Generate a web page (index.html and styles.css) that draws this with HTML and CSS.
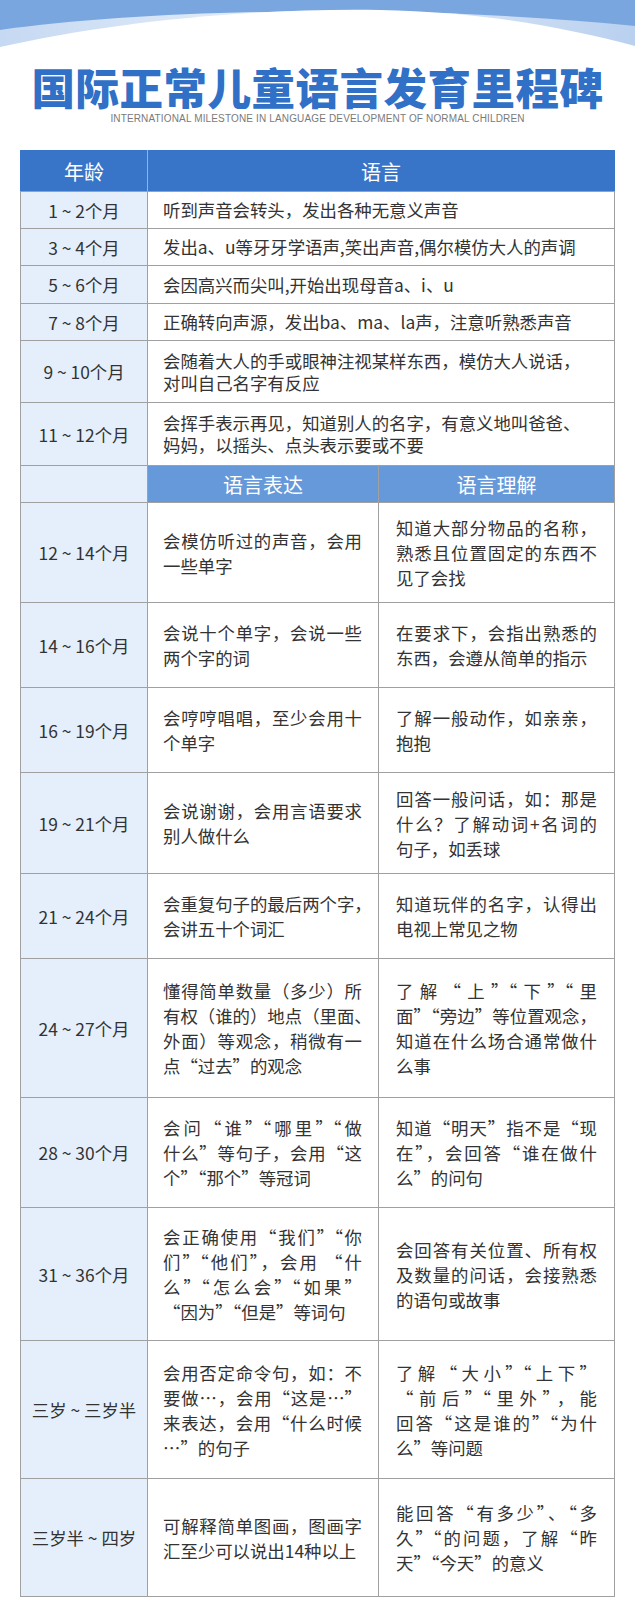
FILE: index.html
```html
<!DOCTYPE html>
<html lang="zh-CN">
<head>
<meta charset="utf-8">
<title>国际正常儿童语言发育里程碑</title>
<link rel="stylesheet" href="styles.css">
</head>
<body>
<div class="deco">
  <svg viewBox="0 0 635 60" width="635" height="60" preserveAspectRatio="none">
    <defs>
      <linearGradient id="band" x1="0" y1="0" x2="1" y2="0">
        <stop offset="0" stop-color="#c6d9f2"/>
        <stop offset="0.5" stop-color="#e9f1fb"/>
        <stop offset="1" stop-color="#b9d0ef"/>
      </linearGradient>
    </defs>
    <rect x="0" y="0" width="635" height="60" fill="#7aa6e0"/>
    <path d="M0,60 L0,30 C160,8 420,4 635,26 L635,60 Z" fill="url(#band)"/>
    <path d="M0,60 L0,47 C110,22 250,8 380,10 C480,12 560,26 635,46 L635,60 Z" fill="#ffffff"/>
  </svg>
</div>
<header class="head">
  <h1 class="title">国际正常儿童语言发育里程碑</h1>
  <p class="subtitle">INTERNATIONAL MILESTONE IN LANGUAGE DEVELOPMENT OF NORMAL CHILDREN</p>
</header>
<table class="chart">
  <colgroup>
    <col class="c-age">
    <col class="c-mid">
    <col class="c-right">
  </colgroup>
  <tr class="hd">
    <th class="th-age">年龄</th>
    <th colspan="2">语言</th>
  </tr>
  <tr class="h37"><td class="age">1 ~ 2个月</td><td class="txt" colspan="2">听到声音会转头，发出各种无意义声音</td></tr>
  <tr class="h37"><td class="age">3 ~ 4个月</td><td class="txt" colspan="2">发出a、u等牙牙学语声,笑出声音,偶尔模仿大人的声调</td></tr>
  <tr class="h38"><td class="age">5 ~ 6个月</td><td class="txt" colspan="2">会因高兴而尖叫,开始出现母音a、i、u</td></tr>
  <tr class="h37"><td class="age">7 ~ 8个月</td><td class="txt" colspan="2">正确转向声源，发出ba、ma、la声，注意听熟悉声音</td></tr>
  <tr class="h62"><td class="age">9 ~ 10个月</td><td class="txt" colspan="2">会随着大人的手或眼神注视某样东西，模仿大人说话，<br>对叫自己名字有反应</td></tr>
  <tr class="h63"><td class="age">11 ~ 12个月</td><td class="txt" colspan="2">会挥手表示再见，知道别人的名字，有意义地叫爸爸、<br>妈妈，以摇头、点头表示要或不要</td></tr>
  <tr class="sub h37">
    <td class="age"></td>
    <th class="sh">语言表达</th>
    <th class="sh">语言理解</th>
  </tr>
  <tr class="h100"><td class="age">12 ~ 14个月</td>
    <td class="cell"><span class="ln">会模仿听过的声音，会用</span><span class="ln">一些单字</span></td>
    <td class="cell"><span class="ln">知道大部分物品的名称，</span><span class="ln">熟悉且位置固定的东西不</span><span class="ln">见了会找</span></td></tr>
  <tr class="h85"><td class="age">14 ~ 16个月</td>
    <td class="cell"><span class="ln">会说十个单字，会说一些</span><span class="ln">两个字的词</span></td>
    <td class="cell"><span class="ln">在要求下，会指出熟悉的</span><span class="ln">东西，会遵从简单的指示</span></td></tr>
  <tr class="h85"><td class="age">16 ~ 19个月</td>
    <td class="cell"><span class="ln">会哼哼唱唱，至少会用十</span><span class="ln">个单字</span></td>
    <td class="cell"><span class="ln">了解一般动作，如亲亲，</span><span class="ln">抱抱</span></td></tr>
  <tr class="h101"><td class="age">19 ~ 21个月</td>
    <td class="cell"><span class="ln">会说谢谢，会用言语要求</span><span class="ln">别人做什么</span></td>
    <td class="cell"><span class="ln">回答一般问话，如：那是</span><span class="ln">什么？了解动词+名词的</span><span class="ln">句子，如丢球</span></td></tr>
  <tr class="h85"><td class="age">21 ~ 24个月</td>
    <td class="cell"><span class="ln">会重复句子的最后两个字，</span><span class="ln">会讲五十个词汇</span></td>
    <td class="cell"><span class="ln">知道玩伴的名字，认得出</span><span class="ln">电视上常见之物</span></td></tr>
  <tr class="h139"><td class="age">24 ~ 27个月</td>
    <td class="cell"><span class="ln">懂得简单数量（多少）所</span><span class="ln">有权（谁的）地点（里面、</span><span class="ln">外面）等观念，稍微有一</span><span class="ln">点“过去”的观念</span></td>
    <td class="cell"><span class="ln">了解“上”“下”“里</span><span class="ln">面”“旁边”等位置观念，</span><span class="ln">知道在什么场合通常做什</span><span class="ln">么事</span></td></tr>
  <tr class="h110"><td class="age">28 ~ 30个月</td>
    <td class="cell"><span class="ln">会问“谁”“哪里”“做</span><span class="ln">什么”等句子，会用“这</span><span class="ln">个”“那个”等冠词</span></td>
    <td class="cell"><span class="ln">知道“明天”指不是“现</span><span class="ln">在”，会回答“谁在做什</span><span class="ln">么”的问句</span></td></tr>
  <tr class="h133"><td class="age">31 ~ 36个月</td>
    <td class="cell"><span class="ln">会正确使用“我们”“你</span><span class="ln">们”“他们”，会用 “什</span><span class="ln">么”“怎么会”“如果”</span><span class="ln">“因为”“但是”等词句</span></td>
    <td class="cell"><span class="ln">会回答有关位置、所有权</span><span class="ln">及数量的问话，会接熟悉</span><span class="ln">的语句或故事</span></td></tr>
  <tr class="h138"><td class="age">三岁 ~ 三岁半</td>
    <td class="cell"><span class="ln">会用否定命令句，如：不</span><span class="ln">要做…，会用“这是…”</span><span class="ln">来表达，会用“什么时候</span><span class="ln">…”的句子</span></td>
    <td class="cell"><span class="ln">了解“大小”“上下”</span><span class="ln">“前后”“里外”，能</span><span class="ln">回答“这是谁的”“为什</span><span class="ln">么”等问题</span></td></tr>
  <tr class="h118"><td class="age">三岁半 ~ 四岁</td>
    <td class="cell"><span class="ln">可解释简单图画，图画字</span><span class="ln">汇至少可以说出14种以上</span></td>
    <td class="cell"><span class="ln">能回答“有多少”、“多</span><span class="ln">久”“的问题，了解“昨</span><span class="ln">天”“今天”的意义</span></td></tr>
</table>
</body>
</html>
```

FILE: styles.css
```css
html, body {
  margin: 0;
  padding: 0;
  background: #ffffff;
}

body {
  width: 635px;
  font-family: "Noto Sans CJK SC", "Noto Sans", sans-serif;
  color: #333333;
}

.deco svg {
  display: block;
}

.head {
  text-align: center;
}

.title {
  margin: 5px 0 0;
  font-size: 43.5px;
  line-height: 44px;
  font-weight: 900;
  letter-spacing: 0.5px;
  color: #3070c6;
}

.subtitle {
  margin: 4px 0 0;
  font-family: "Liberation Sans", Arial, sans-serif;
  font-size: 10px;
  line-height: 12px;
  color: #7a7a7a;
  letter-spacing: 0.15px;
}

.chart {
  margin: 25px 0 0 20px;
  width: 594px;
  border-collapse: collapse;
  table-layout: fixed;
  font-size: 17.4px;
}

.c-age { width: 127px; }
.c-mid { width: 231px; }
.c-right { width: 236px; }

.chart td,
.chart th {
  border: 1px solid #a0a0a0;
  padding: 0;
  vertical-align: middle;
}

.chart .hd th {
  background: #3875c8;
  color: #ffffff;
  font-weight: 400;
  font-size: 20px;
  height: 40px;
  border-top-color: #3875c8;
}

.chart .hd .th-age {
  border-left-color: #3875c8;
  border-right-color: #8fb3e3;
}

.chart .hd th:last-child {
  border-right-color: #3875c8;
}

.chart .sh {
  background: #6699da;
  color: #ffffff;
  font-weight: 400;
  font-size: 20px;
}

.chart .age {
  background: #e5effb;
  text-align: center;
  white-space: nowrap;
  font-size: 17.4px;
}

.chart .txt {
  padding: 0 10px 0 15px;
  line-height: 22px;
  white-space: nowrap;
}

.chart .cell {
  padding: 0 16px 0 15px;
  line-height: 25px;
}

.chart .cell + .cell {
  padding: 0 17px 0 17px;
}

.ln {
  display: block;
  white-space: nowrap;
  text-align: justify;
  text-align-last: justify;
}

.ln:last-child {
  text-align-last: left;
}

.h37 { height: 37px; }
.h38 { height: 38px; }
.h62 { height: 62px; }
.h63 { height: 63px; }
.h85 { height: 85px; }
.h100 { height: 100px; }
.h101 { height: 101px; }
.h110 { height: 110px; }
.h118 { height: 118px; }
.h133 { height: 133px; }
.h138 { height: 138px; }
.h139 { height: 139px; }
```
